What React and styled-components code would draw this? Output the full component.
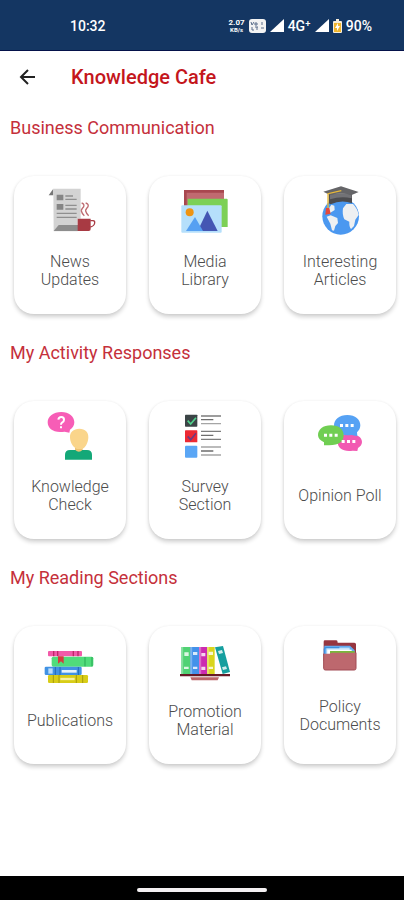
import React from 'react';
import styled, { createGlobalStyle } from 'styled-components';

const GlobalStyle = createGlobalStyle`
  * {
    box-sizing: border-box;
  }

  body {
    margin: 0;
    background: #fff;
    font-family: Roboto, 'Liberation Sans', sans-serif;
  }
`;

const Screen = styled.div`
  display: flex;
  flex-direction: column;
  min-height: 100vh;
`;

const StatusBar = styled.div`
  display: flex;
  align-items: center;
  justify-content: space-between;
  height: 51px;
  padding: 2px 32px 0 70px;
  background: #143662;
  border-bottom: 1px solid #04124a;
  color: #fff;
  font-size: 14px;
  font-weight: 500;
`;

const StatusGroup = styled.div`
  display: flex;
  align-items: center;
  gap: 4px;
`;

const NetSpeed = styled.span`
  display: flex;
  flex-direction: column;
  align-items: center;
  font-size: 8px;
  font-weight: 700;
  line-height: 7px;
`;

const SpeedUnit = styled.span`
  font-size: 6px;
`;

const AppBar = styled.header`
  display: flex;
  align-items: center;
  gap: 31px;
  height: 51px;
  padding: 0 16px;
`;

const BackButton = styled.button`
  display: flex;
  padding: 0;
  border: 0;
  background: none;
  color: #222;
  cursor: pointer;
`;

const Title = styled.h1`
  margin: 0;
  color: #c4161c;
  font-size: 20px;
  font-weight: 500;
  line-height: 24px;
`;

const Main = styled.main`
  display: flex;
  flex-direction: column;
  gap: 27px;
  padding: 14px 8px 24px 10px;
`;

const SectionTitle = styled.h2`
  margin: 0 0 36px;
  color: #c5303b;
  font-size: 18px;
  font-weight: 400;
  line-height: 24px;
`;

const CardGrid = styled.div`
  display: grid;
  grid-template-columns: repeat(3, 1fr);
  gap: 23px;
  padding-left: 4px;
`;

const Card = styled.button`
  display: flex;
  flex-direction: column;
  align-items: center;
  height: 138px;
  padding: 8px 0 0;
  border: 0;
  border-radius: 20px;
  background: #fff;
  box-shadow: 0 3px 4px rgba(0, 0, 0, 0.18), 0 0 3px rgba(0, 0, 0, 0.06);
  color: #4c4c4c;
  font-family: inherit;
  font-size: 16px;
  font-weight: 300;
  line-height: 18px;
  cursor: pointer;
`;

const Label = styled.span`
  display: flex;
  align-items: center;
  justify-content: center;
  width: min-content;
  min-height: 36px;
  margin-top: 17px;
  text-align: center;
  white-space: ${({ $oneLine }) => ($oneLine ? 'nowrap' : 'normal')};
`;

const BottomBar = styled.footer`
  display: flex;
  align-items: center;
  justify-content: center;
  height: 24px;
  margin-top: auto;
  padding-top: 4px;
  background: #000;
`;

const HomePill = styled.div`
  width: 32%;
  height: 4px;
  border-radius: 2px;
  background: #f4f0f2;
`;

// Every card drawing is made on a grid three times as fine as its size.
const Drawing = styled.svg.attrs({ 'aria-hidden': true })`
  display: block;
  flex: none;
  width: 56px;
  height: ${({ $height }) => $height || 52}px;
`;

function NewsIcon() {
  return (
    <Drawing viewBox="126 57 168 156">
      <path d="M146 91l14-20v20z" fill="#777" />
      <path d="M160 71h82v90h-9v38h-72z" fill="#d3d3d3" />
      <path d="M161 198l15-18h60v18z" fill="#8d8d8d" />
      <path d="M170 89h20v17h-20zM170 117h20v17h-20z" fill="#858585" />
      <path d="M196 93h23M196 103h34M196 121h34M196 132h34M170 145h60M170 157h60" stroke="#8f8f8f" strokeWidth="4" />
      <path d="M233 161h39v31q0 6-6 6h-33z" fill="#a83a43" />
      <path d="M271 167h8q6 0 5 7-1 9-13 12" fill="none" stroke="#a83a43" strokeWidth="4" />
      <path d="M245 114q9 3 6 11-8 8-7 13 2 8 9 14M257 114q10 3 7 11-8 8-7 13 2 8 9 14" fill="none" stroke="#bd6b70" strokeWidth="4" />
    </Drawing>
  );
}

function MediaIcon() {
  return (
    <Drawing viewBox="111 57 168 156">
      <path d="M132 75h120v50H132z" fill="#c06a70" />
      <path d="M132 75h120v8H140v42h-8z" fill="#a8474f" />
      <path d="M143 101h117q3 0 3 3v82h-22v-60h-98z" fill="#7cd056" />
      <rect x="124" y="121" width="121" height="82" rx="3" fill="#b5dffb" />
      <circle cx="149" cy="142" r="12" fill="#ef9412" />
      <path d="M173 198l29-61 31 61z" fill="#4456b3" />
      <path d="M138 198l27-42 24 42z" fill="#56a0f2" />
    </Drawing>
  );
}

function ArticlesIcon() {
  return (
    <Drawing viewBox="126 57 168 156">
      <circle cx="212" cy="154" r="55" fill="#4b98f0" />
      <path d="M219 130l10-13h20q14 14 17 33l-10 14-4 19-9 9q-6-7-5-22l-15-7q-7-15-4-33z" fill="#eef0f2" />
      <path d="M170 155l12-4 20 8 2 15-8 9-4 14-6-1-5-20zM184 119l9 3 1 13-14 9-8-6z" fill="#eef0f2" />
      <path d="M176 86h70v29q-31-13-64 3l-6-3z" fill="#4c4c4f" />
      <path d="M160 80l53-16 53 17-21 9q-33-9-65 0z" fill="#656568" />
      <path d="M180 90q33-11 65 0v10q-32-8-65 3z" fill="#727276" />
      <path d="M214 77l-40 9v45" fill="none" stroke="#e9b938" strokeWidth="4" />
      <path d="M168 129h10l4 17-16 3z" fill="#e44a3c" />
    </Drawing>
  );
}

function KnowledgeIcon() {
  return (
    <Drawing viewBox="126 57 168 156">
      <path d="M184 66c23 0 39 13 39 31 0 10-5 17-13 22l-2 9-14-3c-32 6-51-9-51-28 0-18 17-31 41-31z" fill="#f75db6" />
      <path d="M175 89q1-8 9-8t8 8q0 6-6 9-3 2-3 6M183 109v6" fill="none" stroke="#fff" strokeWidth="6" />
      <path d="M195 209v-14q0-15 15-15h51q15 0 15 15v14z" fill="#14a878" />
      <path d="M225 168h23v11q-11 12-23 0z" fill="#edc375" />
      <path d="M238 116c18 0 28 11 27 27-1 17-10 31-19 34h-15c-11-5-20-18-21-34-1-16 10-27 28-27z" fill="#fad58b" />
    </Drawing>
  );
}

function SurveyIcon() {
  return (
    <Drawing viewBox="111 57 168 156">
      <rect x="135" y="74" width="37" height="36" rx="2" fill="#3b4446" />
      <rect x="135" y="121" width="37" height="36" rx="2" fill="#ed2933" />
      <rect x="135" y="167" width="37" height="36" rx="3" fill="#5aa6f5" />
      <path d="M143 92l9 10 16-19" fill="none" stroke="#4fd18b" strokeWidth="5" />
      <path d="M143 139l9 10 16-19" fill="none" stroke="#6b3a83" strokeWidth="5" />
      <path d="M183 78h60M183 124h60M183 148h60" stroke="#7d7d7d" strokeWidth="4" />
      <path d="M183 89h37M183 136h37M183 183h37" stroke="#6e6e6e" strokeWidth="4" />
      <path d="M183 101h60M183 171h60M183 195h60" stroke="#a5a5a5" strokeWidth="4" />
    </Drawing>
  );
}

function PollIcon() {
  return (
    <Drawing viewBox="126 57 168 156">
      <path d="M238 132c23 0 38 9 38 24 0 8-5 14-12 18l-2 9-14-1c-28 4-45-7-45-26 0-15 12-24 35-24z" fill="#f25ab2" />
      <path d="M232 75c24 0 39 13 39 31 0 9-4 16-10 21l1 12-17-4c-34 5-53-9-53-29 0-18 16-31 40-31z" fill="#56a2f4" />
      <path d="M183 106c24 0 38 12 38 30 0 19-13 30-44 30h-15v-9c-11-5-18-12-18-21 0-18 15-30 39-30z" fill="#70ce52" />
      <path d="M210 102h9v9h-9zM226 102h9v9h-9zM242 102h9v9h-9zM162 131h9v9h-9zM178 131h9v9h-9zM194 131h9v9h-9zM215 150h9v9h-9zM231 150h9v9h-9zM247 150h9v9h-9z" fill="#fff" />
    </Drawing>
  );
}

function PublicationsIcon() {
  return (
    <Drawing viewBox="126 60 168 156">
      <rect x="144" y="111" width="102" height="16" rx="3" fill="#f25aa9" />
      <path d="M161 111v16M173 111v16M220 111v16M234 111v16" stroke="#bd2867" strokeWidth="4" />
      <rect x="155" y="128" width="125" height="30" rx="5" fill="#50dc7b" />
      <path d="M255 129v28M276 129v28" stroke="#27a955" strokeWidth="3" />
      <path d="M174 127h17v22l-8-7-9 7z" fill="#d63a3e" />
      <rect x="134" y="158" width="111" height="25" rx="4" fill="#4192e4" />
      <path d="M145 163h13v16h-13z" fill="#b9dcfa" />
      <path d="M166 159v24M180 159v24M235 159v24" stroke="#2468b3" strokeWidth="3" />
      <path d="M185 172h45" stroke="#e4f2fd" strokeWidth="8" />
      <rect x="144" y="183" width="120" height="24" rx="4" fill="#d8cd18" />
      <path d="M160 183v24M177 183v24M229 183v24M248 183v24" stroke="#a69b0a" strokeWidth="3" />
      <path d="M181 195h43" stroke="#f7f1a0" strokeWidth="7" />
    </Drawing>
  );
}

function PromotionIcon() {
  return (
    <Drawing viewBox="111 60 168 156">
      <path d="M124 99h27v82h-27z" fill="#50d274" />
      <path d="M151 99h26v82h-26z" fill="#4391ea" />
      <path d="M178 99h23v82h-23z" fill="#cc2bb0" />
      <path d="M202 99h22v82h-22z" fill="#d9d51d" />
      <path d="M225 100l24-4 21 78-22 6z" fill="#159f9f" />
      <path d="M128 99v82M155 99v82M182 99v82M206 99v82" stroke="#fff" strokeOpacity=".35" strokeWidth="3" />
      <path d="M133 115h13v11h-13zM159 114h13v9h-13zM184 117h12v10h-12zM206 113h13v10h-13zM234 111l12-3 3 9-12 3z" fill="#fff" fillOpacity=".8" />
      <path d="M132 158h14v7h-14zM159 158h13v7h-13zM184 158h12v10h-12zM206 158h13v7h-13zM246 160l12-3 3 8-12 3z" fill="#fff" fillOpacity=".8" />
      <path d="M120 180h150v7H120z" fill="#681a27" />
      <path d="M151 190h86l-4 9h-78z" fill="#bc6569" />
    </Drawing>
  );
}

function PolicyIcon() {
  return (
    <Drawing viewBox="126 60 168 141" $height={47}>
      <path d="M161 83q0-4 4-4h34q4 0 4 7h50q5 0 5 5v50h-97z" fill="#963640" />
      <path d="M163 95h77l14 14v20h-91z" fill="#62aaf0" />
      <path d="M169 101h70v22h-70z" fill="#c4e2fb" />
      <path d="M172 107h73v16h-73z" fill="#fff" />
      <path d="M163 124v-19q0-4 5-4h40" fill="none" stroke="#3e8fdf" strokeWidth="4" />
      <path d="M180 111h74v12h-74z" fill="#78b83b" />
      <path d="M161 119h18l5-3h74v47q0 5-5 5h-87q-5 0-5-5z" fill="#bd686e" />
      <path d="M161 119v44q0 5 5 5h87q5 0 5-5v-47" fill="none" stroke="#a14b54" strokeWidth="3" />
    </Drawing>
  );
}

function SignalIcon() {
  return (
    <svg width="14" height="14" viewBox="0 0 14 14" aria-hidden="true">
      <path d="M14 0v13H0z" fill="#fff" />
    </svg>
  );
}

function VolteIcon() {
  return (
    <svg width="17" height="14" viewBox="0 0 17 14" aria-hidden="true">
      <rect width="17" height="14" rx="3" fill="#f3f3f3" />
      <path d="M2 3l1 3 2-3M6 4h2v2H6zM3 8v3h2M6 8h3M8 8v3M13 3v3M12 9h3" fill="none" stroke="#5c6f8b" strokeWidth="1" />
    </svg>
  );
}

function BatteryIcon() {
  return (
    <svg width="9" height="14" viewBox="0 0 9 14" aria-hidden="true">
      <path d="M3 0h3v2h2q1 0 1 1v10q0 1-1 1H1q-1 0-1-1V3q0-1 1-1h2z" fill="#f7eedb" />
      <path d="M1 4h7v9H1z" fill="#f0b52d" />
      <path d="M5 4L2 9h2v3l3-5H5z" fill="#fff" />
    </svg>
  );
}

const sections = [
  {
    title: 'Business Communication',
    items: [
      { label: 'News Updates', Icon: NewsIcon },
      { label: 'Media Library', Icon: MediaIcon },
      { label: 'Interesting Articles', Icon: ArticlesIcon },
    ],
  },
  {
    title: 'My Activity Responses',
    items: [
      { label: 'Knowledge Check', Icon: KnowledgeIcon },
      { label: 'Survey Section', Icon: SurveyIcon },
      { label: 'Opinion Poll', Icon: PollIcon, oneLine: true },
    ],
  },
  {
    title: 'My Reading Sections',
    items: [
      { label: 'Publications', Icon: PublicationsIcon },
      { label: 'Promotion Material', Icon: PromotionIcon },
      { label: 'Policy Documents', Icon: PolicyIcon },
    ],
  },
];

function Section({ title, items }) {
  return (
    <section>
      <SectionTitle>{title}</SectionTitle>
      <CardGrid>
        {items.map(({ label, Icon, oneLine }) => (
          <Card key={label} type="button">
            <Icon />
            <Label $oneLine={oneLine}>{label}</Label>
          </Card>
        ))}
      </CardGrid>
    </section>
  );
}

function App() {
  return (
    <Screen>
      <GlobalStyle />

      <StatusBar>
        <span>10:32</span>
        <StatusGroup>
          <NetSpeed>
            2.07
            <SpeedUnit>KB/s</SpeedUnit>
          </NetSpeed>
          <VolteIcon />
          <SignalIcon />
          <span>4G⁺</span>
          <SignalIcon />
          <BatteryIcon />
          <span>90%</span>
        </StatusGroup>
      </StatusBar>

      <AppBar>
        <BackButton type="button" aria-label="Back">
          <svg width="24" height="24" viewBox="0 0 24 24" aria-hidden="true">
            <path d="M19 12H6M12 5l-7 7 7 7" fill="none" stroke="currentColor" strokeWidth="2" />
          </svg>
        </BackButton>
        <Title>Knowledge Cafe</Title>
      </AppBar>

      <Main>
        {sections.map((section) => (
          <Section key={section.title} title={section.title} items={section.items} />
        ))}
      </Main>

      <BottomBar>
        <HomePill />
      </BottomBar>
    </Screen>
  );
}

export default App;
